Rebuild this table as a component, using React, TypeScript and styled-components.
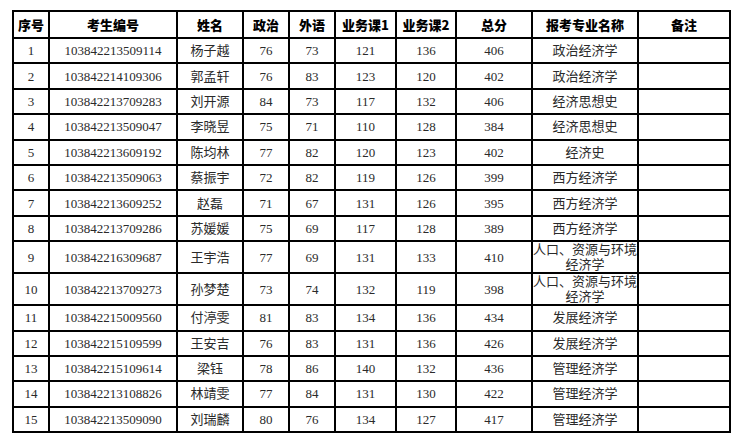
import React from "react";
import styled, { createGlobalStyle } from "styled-components";

const Global = createGlobalStyle`
  html, body { margin: 0; padding: 0; background: #fff; }
  body { font-family: "Liberation Serif", "Noto Sans CJK SC", serif; }
`;

const Page = styled.div`
  padding: 10px 0 0 12px;
`;

const Table = styled.table`
  border-collapse: collapse;
  table-layout: fixed;
  width: 719px;
  border: 2px solid #000;
`;

const HeadCell = styled.th`
  border: 2px solid #000;
  padding: 0;
  height: 25px;
  font-family: "Noto Sans CJK SC", sans-serif;
  font-weight: 900;
  font-size: 13px;
  color: #000;
  text-align: center;
  vertical-align: middle;
  line-height: 15px;
`;

const Row = styled.tr<{ $tall?: boolean }>`
  height: ${(p) => (p.$tall ? "31px" : "25.4px")};
`;

const Cell = styled.td`
  border: 2px solid #000;
  padding: 0;
  font-family: "Liberation Serif", "Noto Sans CJK SC", serif;
  font-size: 13px;
  line-height: 15px;
  color: #2a2a2a;
  text-align: center;
  vertical-align: middle;
  overflow: hidden;
`;

const widths = [36, 128, 66, 46, 46, 61, 60, 76, 106, 92];
const headers = ["序号", "考生编号", "姓名", "政治", "外语", "业务课1", "业务课2", "总分", "报考专业名称", "备注"];

const rows: [string, string, string, number, number, number, number, number, string][] = [
  ["1", "103842213509114", "杨子越", 76, 73, 121, 136, 406, "政治经济学"],
  ["2", "103842214109306", "郭孟轩", 76, 83, 123, 120, 402, "政治经济学"],
  ["3", "103842213709283", "刘开源", 84, 73, 117, 132, 406, "经济思想史"],
  ["4", "103842213509047", "李晓昱", 75, 71, 110, 128, 384, "经济思想史"],
  ["5", "103842213609192", "陈均林", 77, 82, 120, 123, 402, "经济史"],
  ["6", "103842213509063", "蔡振宇", 72, 82, 119, 126, 399, "西方经济学"],
  ["7", "103842213609252", "赵磊", 71, 67, 131, 126, 395, "西方经济学"],
  ["8", "103842213709286", "苏媛媛", 75, 69, 117, 128, 389, "西方经济学"],
  ["9", "103842216309687", "王宇浩", 77, 69, 131, 133, 410, "人口、资源与环境经济学"],
  ["10", "103842213709273", "孙梦楚", 73, 74, 132, 119, 398, "人口、资源与环境经济学"],
  ["11", "103842215009560", "付渟雯", 81, 83, 134, 136, 434, "发展经济学"],
  ["12", "103842215109599", "王安吉", 76, 83, 131, 136, 426, "发展经济学"],
  ["13", "103842215109614", "梁钰", 78, 86, 140, 132, 436, "管理经济学"],
  ["14", "103842213108826", "林靖雯", 77, 84, 131, 130, 422, "管理经济学"],
  ["15", "103842213509090", "刘瑞麟", 80, 76, 134, 127, 417, "管理经济学"],
];

export default function App() {
  return (
    <Page>
      <Global />
      <Table>
        <colgroup>
          {widths.map((w, i) => (
            <col key={i} style={{ width: w }} />
          ))}
        </colgroup>
        <thead>
          <tr>
            {headers.map((h) => (
              <HeadCell key={h}>{h}</HeadCell>
            ))}
          </tr>
        </thead>
        <tbody>
          {rows.map((r) => (
            <Row key={r[0]} $tall={r[8].length > 6}>
              {r.map((v, i) => (
                <Cell key={i}>{v}</Cell>
              ))}
              <Cell />
            </Row>
          ))}
        </tbody>
      </Table>
    </Page>
  );
}
